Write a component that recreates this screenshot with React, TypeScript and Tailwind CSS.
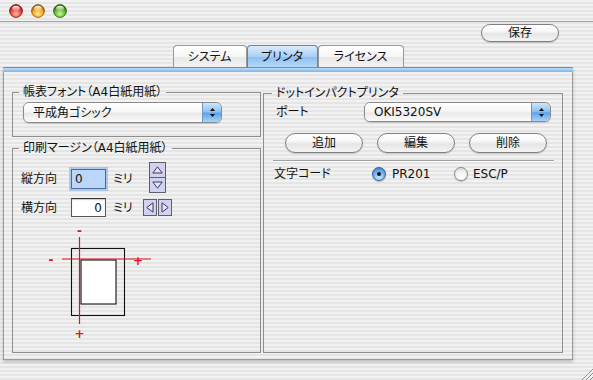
import React from "react";

const STRIPES =
  "bg-[repeating-linear-gradient(180deg,#f2f2f2_0px,#f2f2f2_2px,#e5e5e5_2px,#e5e5e5_4px)]";

function Light({ id, base, dark, light }: { id: string; base: string; dark: string; light: string }) {
  return (
    <svg width="14" height="14" viewBox="0 0 14 14">
      <defs>
        <radialGradient id={`body-${id}`} cx="50%" cy="72%" r="62%">
          <stop offset="0" stopColor={light} />
          <stop offset="0.65" stopColor={base} />
          <stop offset="1" stopColor={dark} />
        </radialGradient>
        <linearGradient id={`hl-${id}`} x1="0" y1="0" x2="0" y2="1">
          <stop offset="0" stopColor="#ffffff" stopOpacity="0.95" />
          <stop offset="1" stopColor="#ffffff" stopOpacity="0.1" />
        </linearGradient>
      </defs>
      <circle cx="7" cy="7" r="6.4" fill={`url(#body-${id})`} stroke={dark} strokeWidth="0.9" />
      <ellipse cx="7" cy="4.3" rx="3.9" ry="2.5" fill={`url(#hl-${id})`} />
    </svg>
  );
}

function AquaButton({ children, className = "" }: { children: React.ReactNode; className?: string }) {
  return (
    <div
      className={`flex items-center justify-center rounded-full border border-[#808080] bg-[linear-gradient(180deg,#ffffff_0%,#f7f7f7_40%,#e6e6e6_55%,#f4f4f4_100%)] shadow-[0_1px_1px_rgba(0,0,0,0.18)] ${className}`}
    >
      {children}
    </div>
  );
}

function PopupArrows() {
  return (
    <svg width="7" height="11" viewBox="0 0 7 11">
      <path d="M3.5 1 L6 4 L1 4 Z" fill="#111" />
      <path d="M3.5 10 L6 7 L1 7 Z" fill="#111" />
    </svg>
  );
}

function Popup({ label, className = "" }: { label: string; className?: string }) {
  return (
    <div
      className={`flex rounded-[6px] border border-[#8a8a8a] overflow-hidden shadow-[0_1px_1px_rgba(0,0,0,0.15)] ${className}`}
    >
      <div className="flex-1 flex items-center pl-[9px] bg-[linear-gradient(180deg,#ffffff_0%,#f7f7f7_45%,#e9e9e9_55%,#fbfbfb_100%)]">
        {label}
      </div>
      <div className="w-[19px] flex items-center justify-center border-l border-[#6f97cc] rounded-r-[5px] bg-[linear-gradient(180deg,#cfe6fb_0%,#8fc2f2_45%,#5ea3ec_55%,#a6d4fa_100%)]">
        <PopupArrows />
      </div>
    </div>
  );
}

function Tab({ label, selected, className = "" }: { label: string; selected?: boolean; className?: string }) {
  return (
    <div
      className={
        selected
          ? `h-[22px] flex items-center justify-center rounded-t-[4px] border border-b-0 border-[#5b86bd] bg-[linear-gradient(180deg,#dcecfc_0%,#a9d0f5_50%,#8dc0f1_55%,#b5daf9_100%)] ${className}`
          : `h-[22px] flex items-center justify-center rounded-t-[4px] border border-b-0 border-[#989898] bg-[linear-gradient(180deg,#ffffff_0%,#f6f6f6_50%,#e8e8e8_55%,#f3f3f3_100%)] ${className}`
      }
    >
      {label}
    </div>
  );
}

function Radio({ checked }: { checked?: boolean }) {
  return checked ? (
    <div className="w-[14px] h-[14px] rounded-full border border-[#365f96] bg-[radial-gradient(circle_at_50%_78%,#c9e9ff_0%,#6aaef0_55%,#2e6fc2_100%)] flex items-center justify-center shadow-[0_1px_1px_rgba(0,0,0,0.25)]">
      <div className="w-[4px] h-[4px] rounded-full bg-[#111]" />
    </div>
  ) : (
    <div className="w-[14px] h-[14px] rounded-full border border-[#8a8a8a] bg-[radial-gradient(circle_at_50%_78%,#ffffff_0%,#f1f1f1_55%,#cfcfcf_100%)] shadow-[0_1px_1px_rgba(0,0,0,0.2)]" />
  );
}

function TriUp() {
  return (
    <svg width="11" height="8" viewBox="0 0 11 8">
      <path d="M5.5 0.8 L10.2 7 L0.8 7 Z" fill="#e4e4f8" stroke="#3a3a5a" strokeWidth="1" />
    </svg>
  );
}
function TriDown() {
  return (
    <svg width="11" height="8" viewBox="0 0 11 8">
      <path d="M5.5 7.2 L10.2 1 L0.8 1 Z" fill="#e4e4f8" stroke="#3a3a5a" strokeWidth="1" />
    </svg>
  );
}
function TriLeft() {
  return (
    <svg width="8" height="11" viewBox="0 0 8 11">
      <path d="M0.8 5.5 L7 0.8 L7 10.2 Z" fill="#e4e4f8" stroke="#3a3a5a" strokeWidth="1" />
    </svg>
  );
}
function TriRight() {
  return (
    <svg width="8" height="11" viewBox="0 0 8 11">
      <path d="M7.2 5.5 L1 0.8 L1 10.2 Z" fill="#e4e4f8" stroke="#3a3a5a" strokeWidth="1" />
    </svg>
  );
}

function MarginDiagram() {
  return (
    <svg width="110" height="115" viewBox="0 0 110 115" className="ml-[32px] mt-[8px]">
      <rect x="26.5" y="23.5" width="53" height="67" fill="none" stroke="#111" strokeWidth="1.1" />
      <rect x="36" y="35" width="35" height="44" fill="#ffffff" stroke="#111" strokeWidth="1.1" />
      <line x1="34.5" y1="12" x2="34.5" y2="99" stroke="#e0121e" strokeWidth="1.2" />
      <line x1="17" y1="34" x2="106" y2="34" stroke="#e0121e" strokeWidth="1.2" />
      <text x="34.5" y="10" fill="#e0121e" fontSize="12" fontWeight="bold" textAnchor="middle" fontFamily="DejaVu Sans">-</text>
      <text x="6" y="39" fill="#e0121e" fontSize="12" fontWeight="bold" textAnchor="middle" fontFamily="DejaVu Sans">-</text>
      <text x="93" y="40" fill="#e0121e" fontSize="12" fontWeight="bold" textAnchor="middle" fontFamily="DejaVu Sans">+</text>
      <text x="34.5" y="113" fill="#e0121e" fontSize="12" fontWeight="bold" textAnchor="middle" fontFamily="DejaVu Sans">+</text>
    </svg>
  );
}

function ResizeGrip() {
  return (
    <svg width="13" height="13" viewBox="0 0 13 13" className="absolute right-0 bottom-0">
      <line x1="2" y1="13" x2="13" y2="2" stroke="#8a8a8a" strokeWidth="1" />
      <line x1="6" y1="13" x2="13" y2="6" stroke="#8a8a8a" strokeWidth="1" />
      <line x1="10" y1="13" x2="13" y2="10" stroke="#8a8a8a" strokeWidth="1" />
      <line x1="3" y1="13" x2="13" y2="3" stroke="#ffffff" strokeWidth="1" />
      <line x1="7" y1="13" x2="13" y2="7" stroke="#ffffff" strokeWidth="1" />
    </svg>
  );
}

export default function App() {
  return (
    <div
      className={`relative w-[593px] h-[380px] overflow-hidden ${STRIPES} text-[#111] text-[12px] leading-[14px] font-['DejaVu_Sans','Noto_Sans_CJK_JP',sans-serif] [font-feature-settings:'palt']`}
    >
      {/* title bar */}
      <div className="h-[22px] border-b border-[#a4a4a4] flex items-center pl-[9px] gap-[8px]">
        <Light id="close" base="#e24a40" dark="#8e1c14" light="#ffb9a8" />
        <Light id="min" base="#f0a623" dark="#9b5c06" light="#ffe890" />
        <Light id="zoom" base="#62b52c" dark="#2b690c" light="#cdf7a0" />
      </div>

      {/* toolbar */}
      <div className="h-[23px] pt-[2px] flex justify-end pr-[34px]">
        <AquaButton className="w-[78px] h-[18px]">保存</AquaButton>
      </div>

      {/* tabs */}
      <div className="ml-[3px] w-[570px] flex justify-center">
        <Tab label="システム" className="w-[74px]" />
        <Tab label="プリンタ" selected className="w-[71px]" />
        <Tab label="ライセンス" className="w-[86px]" />
      </div>

      {/* tab panel */}
      <div className="ml-[3px] w-[570px] shadow-[0_2px_3px_rgba(0,0,0,0.22)]">
        <div className="h-[5px] border-t border-[#5d8fd0] bg-[linear-gradient(180deg,#c2ddf8_0%,#96c5f1_60%,#7fb4ea_100%)]" />
        <div className="h-[288px] border-x border-b border-[#9a9a9a] flex items-start pl-[8px] pt-[13px] gap-[2px]">
          {/* left column */}
          <div className="w-[249px] flex flex-col gap-[4px]">
            <fieldset className="h-[52px] border border-[#8f8f8f] min-w-0">
              <legend className="ml-[6px] px-[4px] leading-[14px]">帳表フォント（A4白紙用紙）</legend>
              <Popup label="平成角ゴシック" className="ml-[10px] mt-[3px] w-[199px] h-[21px]" />
            </fieldset>

            <fieldset className="h-[212px] border border-[#8f8f8f] min-w-0">
              <legend className="ml-[6px] px-[4px] leading-[14px]">印刷マージン（A4白紙用紙）</legend>

              <div className="flex items-start h-[31px] mt-[7px]">
                <span className="ml-[8px] w-[50px] mt-[7px] leading-[20px]">縦方向</span>
                <div className="mt-[7px] w-[35px] h-[20px] border border-[#4a6a98] bg-[#bcd6f7] shadow-[0_0_0_2px_rgba(120,170,230,0.55)] flex items-center pl-[3px] leading-[18px]">
                  0
                </div>
                <span className="ml-[7px] w-[36px] mt-[7px] leading-[20px]">ミリ</span>
                <div className="w-[17px] h-[31px] flex flex-col border border-[#5e5e6e] bg-[#d2d2f0]">
                  <div className="h-[15px] flex items-center justify-center border-b border-[#5e5e6e]">
                    <TriUp />
                  </div>
                  <div className="flex-1 flex items-center justify-center">
                    <TriDown />
                  </div>
                </div>
              </div>

              <div className="flex items-center mt-[5px] h-[19px]">
                <span className="ml-[8px] w-[50px]">横方向</span>
                <div className="w-[35px] h-[19px] border border-[#555] border-t-[#333] bg-white flex items-center justify-end pr-[3px] shadow-[inset_0_1px_1px_rgba(0,0,0,0.2)]">
                  0
                </div>
                <span className="ml-[7px] w-[30px]">ミリ</span>
                <div className="flex gap-[1px]">
                  <div className="w-[14px] h-[17px] border border-[#5e5e6e] bg-[#d2d2f0] flex items-center justify-center">
                    <TriLeft />
                  </div>
                  <div className="w-[14px] h-[17px] border border-[#5e5e6e] bg-[#d2d2f0] flex items-center justify-center">
                    <TriRight />
                  </div>
                </div>
              </div>

              <MarginDiagram />
            </fieldset>
          </div>

          {/* right column */}
          <fieldset className="w-[300px] h-[267px] mt-[1px] border border-[#8f8f8f] min-w-0">
            <legend className="ml-[8px] px-[4px] leading-[14px]">ドットインパクトプリンタ</legend>

            <div className="flex items-center mt-[2px] h-[20px]">
              <span className="ml-[12px] w-[88px]">ポート</span>
              <Popup label="OKI5320SV" className="w-[187px] h-[20px]" />
            </div>

            <div className="flex mt-[11px] ml-[21px] gap-[14px]">
              <AquaButton className="w-[78px] h-[20px]">追加</AquaButton>
              <AquaButton className="w-[78px] h-[20px]">編集</AquaButton>
              <AquaButton className="w-[78px] h-[20px]">削除</AquaButton>
            </div>

            <div className="mt-[7px] ml-[9px] w-[281px] h-[2px] border-t border-[#a2a2a2] border-b border-b-white" />

            <div className="flex items-center mt-[4px] h-[16px]">
              <span className="ml-[10px] w-[98px]">文字コード</span>
              <Radio checked />
              <span className="ml-[6px] w-[36px]">PR201</span>
              <div className="ml-[26px]">
                <Radio />
              </div>
              <span className="ml-[5px]">ESC/P</span>
            </div>
          </fieldset>
        </div>
      </div>

      <ResizeGrip />
    </div>
  );
}
